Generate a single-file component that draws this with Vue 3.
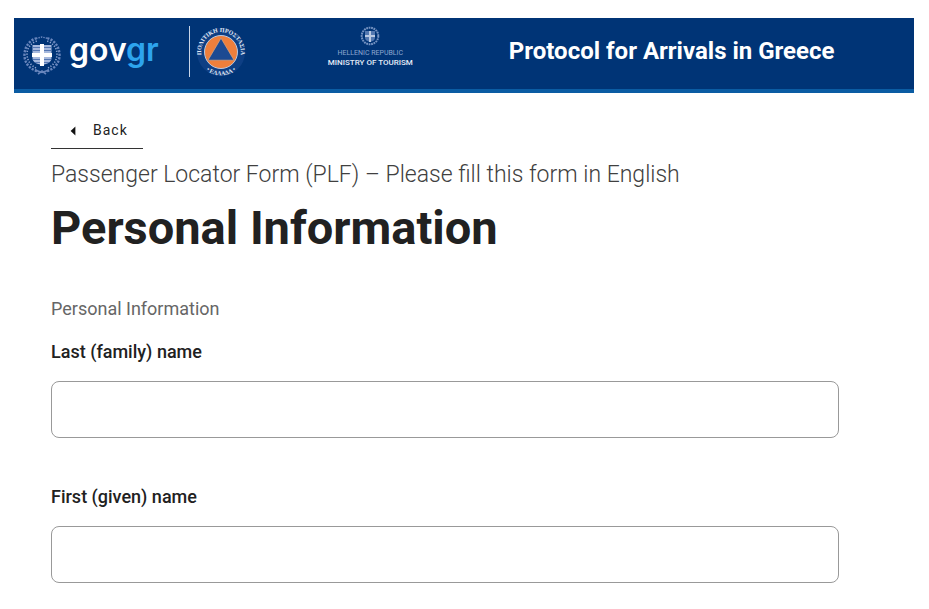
<template>
  <div class="shell">
    <header class="banner">
      <a class="gov-brand" href="#" aria-label="govgr">
        <svg class="crest" viewBox="0 0 40 42" aria-hidden="true">
          <g fill="none" stroke="#6886bd">
            <path d="M15 37C7 35 2 28 2.500 20S8 6 15 4" stroke-width="2.4" stroke-dasharray="2.2 1.3" />
            <path d="M25 37c8-2 13-9 12.500-17S32 6 25 4" stroke-width="2.4" stroke-dasharray="2.2 1.3" />
            <path d="M14 34C8 31 5 26 5 20S9 9 15 7M26 34c6-3 9-8 9-14S31 9 25 7" stroke="#8ea6d1" stroke-width="1.6" stroke-dasharray="1.2 1.6" />
            <path d="M13 36l7 2.500 7-2.500M16 40l4-3 4 3" stroke-width="1.6" />
            <path d="M14 4.500l6-1.500 6 1.500" stroke-width="1.4" stroke-dasharray="1.5 1" />
          </g>
          <path d="M10.500 11h19v13c0 4-4 6-9.500 7-5.500-1-9.500-3-9.500-7z" fill="#a6b9dd" />
          <path d="M11 13.500h18M11 16.500h18M11 25.500h18M13 28.500h14" stroke="#5577b3" stroke-width="1" />
          <path d="M18 10h4v9h8v4h-8v9h-4v-9h-8v-4h8z" fill="#fff" />
        </svg>
        <span class="gov-name">gov<span class="gov-tld">gr</span></span>
      </a>

      <span class="divider"></span>

      <svg class="civil" viewBox="0 0 52 52" role="img" aria-label="Πολιτική Προστασία Ελλάδα">
        <defs>
          <path id="ring-top" d="M10.2 38.1A19.9 19.9 0 1 1 41.8 38.1" />
          <path id="ring-bottom" d="M6 38A23.3 23.3 0 0 0 46 38" />
        </defs>
        <circle cx="26" cy="26" r="24" fill="#0e3f84" />
        <circle cx="26" cy="26" r="16.5" fill="#ee7f3c" stroke="#b9c9e2" stroke-width="1" />
        <path d="M26 12.200L39 34.200H13z" fill="#1c4a92" stroke="#d5a583" stroke-width="0.7" />
        <text class="ring-text"><textPath href="#ring-top" startOffset="50%" text-anchor="middle">ΠΟΛΙΤΙΚΗ ΠΡΟΣΤΑΣΙΑ</textPath></text>
        <text class="ring-text"><textPath href="#ring-bottom" startOffset="50%" text-anchor="middle">• ΕΛΛΑΔΑ •</textPath></text>
      </svg>

      <div class="ministry">
        <svg class="ministry-crest" viewBox="0 0 20 20" aria-hidden="true">
          <circle cx="10" cy="10" r="8.3" fill="none" stroke="#7593c2" stroke-width="2" stroke-dasharray="1.8 0.7" />
          <path d="M5 5h10v7c0 2-2 3-5 4-3-1-5-2-5-4z" fill="#5378b0" />
          <path d="M9 5h2v4h4v2h-4v5H9v-5H5V9h4z" fill="#b9c9e2" />
        </svg>
        <span class="ministry-state">HELLENIC REPUBLIC</span>
        <span class="ministry-name">MINISTRY OF TOURISM</span>
      </div>

      <div class="banner-title">Protocol for Arrivals in Greece</div>
    </header>

    <main class="content">
      <button class="back" type="button">
        <svg class="back-arrow" viewBox="0 0 6 10" aria-hidden="true">
          <path d="M5.4 0.6v8.8L0.6 5z" fill="#111" />
        </svg>
        Back
      </button>

      <p class="caption">Passenger Locator Form (PLF) – Please fill this form in English</p>
      <h1 class="title">Personal Information</h1>

      <form @submit.prevent>
        <p class="section">Personal Information</p>
        <div v-for="field in fields" :key="field.id" class="field">
          <label :for="field.id">{{ field.label }}</label>
          <input :id="field.id" v-model="field.value" type="text" />
        </div>
      </form>
    </main>
  </div>
</template>

<script setup>
import { reactive } from 'vue'

const fields = reactive([
  { id: 'last-name', label: 'Last (family) name', value: '' },
  { id: 'first-name', label: 'First (given) name', value: '' },
])
</script>

<style>
body { background: #fff; }
</style>

<style scoped>
.shell {
  padding: 18px 15px 0 14px;
  font-family: Roboto, "Liberation Sans", sans-serif;
  color: #212121;
}

.banner {
  display: flex;
  align-items: flex-start;
  padding: 8px 8px 11px;
  background: #003476;
  border-bottom: 4px solid #0b5ca3;
}

.gov-brand {
  display: flex;
  align-items: flex-end;
  gap: 7px;
  height: 50px;
  color: #fff;
  text-decoration: none;
}
.crest { width: 40px; height: 42px; }
.gov-name {
  font: 600 32px/40px Inter, sans-serif;
  padding-bottom: 6px;
}
.gov-tld { color: #2da4ee; }

.divider {
  width: 1px;
  height: 51px;
  margin-left: 30px;
  background: #c8d5e8;
}

.civil { width: 52px; height: 52px; margin-left: 5px; }
.ring-text {
  font: 700 6px "Liberation Serif", serif;
  fill: #e3ebf6;
}

.ministry {
  display: flex;
  flex-direction: column;
  align-items: center;
  margin-left: 81px;
  font-family: Roboto, sans-serif;
  white-space: nowrap;
}
.ministry-crest { width: 20px; height: 20px; margin-bottom: 2px; }
.ministry-state { font-size: 7px; line-height: 10px; color: #8ea8d0; }
.ministry-name { font-size: 8px; line-height: 10px; font-weight: 500; color: #e3ebf6; }

.banner-title {
  flex: 1;
  margin-left: 96px;
  padding-top: 10px;
  font-size: 24px;
  line-height: 30px;
  font-weight: 700;
  color: #fff;
  white-space: nowrap;
}

.content { padding: 18px 75px 24px 37px; }

.back {
  display: flex;
  align-items: center;
  gap: 17px;
  padding: 9px 15px 7px 19px;
  border: 0;
  border-bottom: 1px solid #333;
  background: none;
  color: #222;
  font-family: inherit;
  font-size: 14px;
  line-height: 21px;
  font-weight: 400;
  letter-spacing: 1px;
  cursor: pointer;
}
.back-arrow { width: 6px; height: 10px; }

.caption {
  margin: 11px 0 0;
  font-size: 23px;
  line-height: 30px;
  font-weight: 350;
  color: #404040;
}
.title {
  margin: 8px 0 0;
  font-size: 47px;
  line-height: 60px;
  font-weight: 700;
}
.section {
  margin: 39px 0 0;
  font-size: 18px;
  line-height: 24px;
  color: #666;
}

.field { margin-top: 19px; }
.field + .field { margin-top: 47px; }
.field label {
  display: block;
  margin-bottom: 17px;
  font-size: 18px;
  line-height: 24px;
  font-weight: 500;
}
.field input {
  display: block;
  box-sizing: border-box;
  width: 100%;
  height: 57px;
  padding: 0 16px;
  border: 1px solid #999;
  border-radius: 8px;
  background: #fff;
  font: inherit;
  font-size: 18px;
}
.field input:focus { outline: 2px solid #0b5ca3; }
</style>
